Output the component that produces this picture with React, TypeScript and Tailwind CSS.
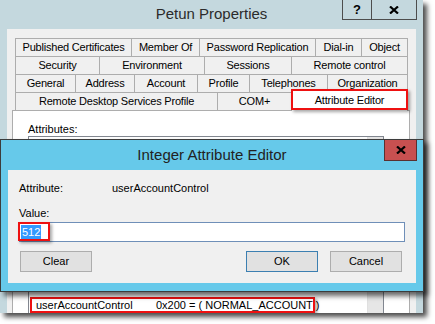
const tabRows = [
  [
    { label: 'Published Certificates', w: 'w-[116px]' },
    { label: 'Member Of', w: 'w-[68px]' },
    { label: 'Password Replication', w: 'w-[116px]' },
    { label: 'Dial-in', w: 'w-[46px]' },
    { label: 'Object', w: 'w-[47px] border-r' },
  ],
  [
    { label: 'Security', w: 'w-[84px]' },
    { label: 'Environment', w: 'w-[105px]' },
    { label: 'Sessions', w: 'w-[87px]' },
    { label: 'Remote control', w: 'w-[117px] border-r' },
  ],
  [
    { label: 'General', w: 'w-[60px]' },
    { label: 'Address', w: 'w-[59px]' },
    { label: 'Account', w: 'w-[63px]' },
    { label: 'Profile', w: 'w-[52px]' },
    { label: 'Telephones', w: 'w-[78px]' },
    { label: 'Organization', w: 'w-[81px] border-r' },
  ],
];

function CloseGlyph({ className }: { className?: string }) {
  return (
    <svg viewBox="0 0 10 8" className={className}>
      <path d="M1 0.5 L9 7.5 M9 0.5 L1 7.5" stroke="#000" strokeWidth="2.2" fill="none" />
    </svg>
  );
}

export default function App() {
  return (
    <div className="relative h-[324px] w-[435px] overflow-hidden bg-white font-['Liberation_Sans',Arial,sans-serif] text-black">
      {/* Petun Properties window */}
      <div className="flex h-[313px] w-[423px] flex-col overflow-hidden bg-[#c4d8de] shadow-[4px_4px_5px_rgba(0,0,0,0.7)]">
        <div className="relative flex h-[29px] shrink-0 items-center justify-center">
          <span className="text-[15px] text-[#2b2b2b]">Petun Properties</span>
          <div className="absolute right-[6px] top-0 flex h-[20px]">
            <div className="flex w-[29px] items-center justify-center border-b border-l border-[#4d4d4d] text-[13px] font-bold">?</div>
            <div className="flex w-[46px] items-center justify-center border-b border-l border-r border-[#4d4d4d]">
              <CloseGlyph className="h-[8px] w-[10px]" />
            </div>
          </div>
        </div>

        <div className="mx-[7px] flex min-h-0 flex-1 flex-col bg-[#f0f0f0] pt-[9px]">
          {/* Tabs */}
          <div className="ml-[8px] flex flex-col text-[11px] tracking-[-0.2px]">
            {tabRows.map((row, i) => (
              <div key={i} className="flex h-[18px]">
                {row.map((t) => (
                  <div key={t.label} className={`flex items-center justify-center whitespace-nowrap border-l border-t border-[#adadad] bg-[#f0f0f0] ${t.w}`}>
                    {t.label}
                  </div>
                ))}
              </div>
            ))}
            <div className="flex h-[18px] items-end whitespace-nowrap">
              <div className="flex h-[18px] w-[202px] items-center justify-center border-l border-t border-[#adadad]">Remote Desktop Services Profile</div>
              <div className="flex h-[18px] w-[74px] items-center justify-center border-l border-t border-[#adadad]">COM+</div>
              <div className="relative z-10 -mb-px flex h-[21px] w-[117px] items-center justify-center border-l border-r border-t border-[#adadad] bg-white pb-[2px]">
                Attribute Editor
                <div className="absolute -left-[1px] -right-[1px] -top-[2px] bottom-[1px] border-2 border-[#ee1111] shadow-[2px_2px_3px_rgba(0,0,0,0.35)]" />
              </div>
            </div>
          </div>

          {/* Tab page */}
          <div className="ml-[5px] flex min-h-0 w-[398px] flex-1 flex-col border-l border-r border-t border-[#adadad] bg-white pl-[15px] pt-[11px] text-[11px]">
            <div className="h-[14px] leading-[14px]">Attributes:</div>
            <div className="flex min-h-0 w-[356px] flex-1 border-l border-r border-t border-[#828790]">
              <div className="flex min-w-0 flex-1 flex-col justify-end overflow-hidden whitespace-nowrap">
                <div className="mb-[3px] flex h-[16px] shrink-0 items-center">
                  <span className="w-[127px] shrink-0 pl-[7px]">sAMAccountType</span>
                  <span className="shrink-0">0x30000000 = ( NORMAL_USER_ACCOUNT )</span>
                </div>
                <div className="flex h-[16px] shrink-0 items-center pl-px">
                  <div className="flex h-[16px] w-[285px] shrink-0 items-center border-2 border-[#ee1111] shadow-[2px_2px_3px_rgba(0,0,0,0.35)]">
                    <span className="w-[124px] shrink-0 pl-[4px]">userAccountControl</span>
                    <span className="shrink-0">0x200 = ( NORMAL_ACCOUNT )</span>
                  </div>
                </div>
              </div>
              <div className="w-[16px] shrink-0 border-l border-[#e0e0e0] bg-[#e6e6e6]" />
            </div>
          </div>
        </div>
      </div>

      {/* Integer Attribute Editor dialog */}
      <div className="absolute left-0 top-[139px] flex h-[153px] w-[424px] flex-col border border-[#3c3c3c] bg-[#66c9ea] shadow-[4px_4px_5px_rgba(0,0,0,0.6)]">
        <div className="relative flex h-[30px] shrink-0 items-center justify-center">
          <span className="text-[15px] text-[#222]">Integer Attribute Editor</span>
          <div className="absolute right-[6px] top-0 flex h-[21px] w-[33px] items-center justify-center border border-t-0 border-[#5a3030] bg-[#c75050]">
            <CloseGlyph className="h-[8px] w-[10px]" />
          </div>
        </div>
        <div className="mx-[7px] flex h-[113px] flex-col bg-[#f0f0f0] pl-[11px] pt-[11px] text-[11px]">
          <div className="flex h-[14px] items-center">
            <span className="w-[93px]">Attribute:</span>
            <span>userAccountControl</span>
          </div>
          <div className="mt-[11px] flex h-[14px] items-center">Value:</div>
          <div className="relative mt-[2px] flex h-[20px] w-[386px] items-center border border-[#6f8fb8] bg-white pl-px">
            <span className="bg-[#3399ff] px-px leading-[14px] text-white">512</span>
            <div className="absolute -left-[2px] -top-[1px] h-[19px] w-[32px] border-2 border-[#ee1111] shadow-[2px_2px_3px_rgba(0,0,0,0.35)]" />
          </div>
          <div className="mt-[9px] flex h-[21px]">
            <div className="ml-px flex w-[72px] items-center justify-center border border-[#adadad] bg-[#e1e1e1]">Clear</div>
            <div className="ml-[154px] flex w-[72px] items-center justify-center border border-[#3c7fb1] bg-[#e1e1e1]">OK</div>
            <div className="ml-[12px] flex w-[72px] items-center justify-center border border-[#adadad] bg-[#e1e1e1]">Cancel</div>
          </div>
        </div>
      </div>
    </div>
  );
}
